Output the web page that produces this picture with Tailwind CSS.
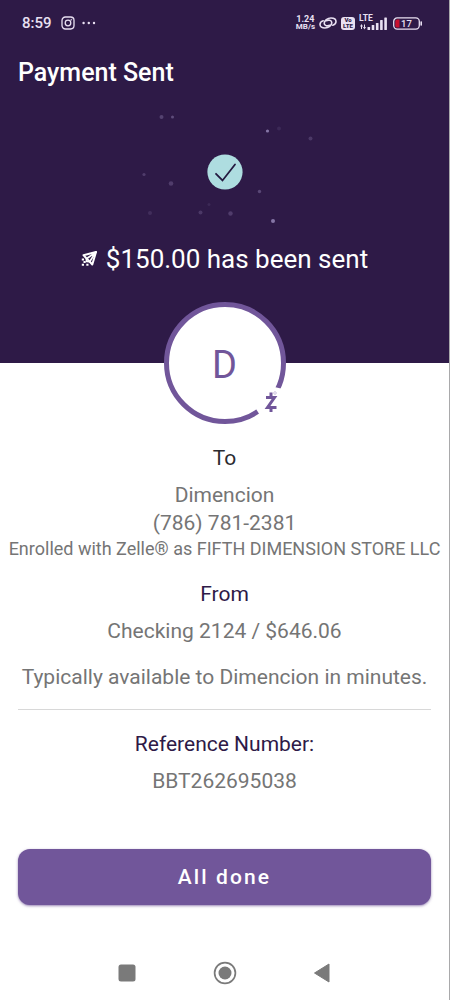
<!DOCTYPE html>
<html lang="en">
<head>
<meta charset="utf-8">
<meta name="viewport" content="width=device-width, initial-scale=1">
<title>Payment Sent</title>
<script src="https://cdn.jsdelivr.net/npm/@tailwindcss/browser@4"></script>
</head>
<body class="bg-white font-['Roboto',sans-serif]">
<div class="flex min-h-screen flex-col overflow-hidden border-r border-[#a9a9ab] text-[21px] leading-7 text-[#757575]">
  <header class="bg-[#2e1a47] pb-[88px] text-white">
    <div class="flex h-[46px] items-center pr-[26px] pl-[22px] text-[#e9e0f2]">
      <span class="text-[15px] font-medium">8:59</span>
      <svg class="ml-[9px] size-[14px]" viewBox="0 0 14 14" fill="none" stroke="currentColor" stroke-width="1.3" aria-hidden="true"><rect x="1" y="1" width="12" height="12" rx="3.4"/><circle cx="7" cy="7" r="2.8"/><circle cx="10.3" cy="3.7" r=".5" fill="currentColor" stroke-width=".5"/></svg>
      <svg class="ml-[7px] h-[14px] w-[14px]" viewBox="0 0 14 14" fill="currentColor" aria-hidden="true"><circle cx="1.6" cy="7" r="1.2"/><circle cx="6.8" cy="7" r="1.2"/><circle cx="12" cy="7" r="1.2"/></svg>
      <span class="ml-auto flex flex-col items-center text-[8px] leading-[8px] font-bold"><span class="text-[9px]">1.24</span><span>MB/s</span></span>
      <svg class="ml-1 h-[14px] w-[18px]" viewBox="0 0 18 14" fill="none" stroke="currentColor" stroke-width="1.6" stroke-linecap="round" aria-hidden="true"><path d="M11 9.300C8.500 10.300 5.200 10 5.200 7.200C5.200 4.500 8.500 2 12 2C15 2 17 3.300 17 5.500C17 7.300 15.500 8.700 13.800 9.200"/><path d="M7 4.700C9.500 3.700 12.800 4 12.800 6.800C12.800 9.500 9.500 12 6 12C3 12 1 10.700 1 8.500C1 6.700 2.500 5.300 4.200 4.800"/></svg>
      <span class="ml-1 flex h-[13px] w-[14px] flex-col items-center justify-center rounded-[3px] bg-[#e9e0f2] text-[6px] leading-[6px] font-black text-[#2e1a47]"><span>Vo</span><span>LTE</span></span>
      <svg class="ml-1 h-[18px] w-[28px]" viewBox="0 0 28 18" fill="currentColor" aria-hidden="true"><text x="0" y="7" font-size="8.500" font-weight="700">LTE</text><path d="M1 12.500L2.500 10L4 12.500H3V15H2V12.500ZM4 13H5V10.500H6V13H7L5.500 15.500Z"/><rect x="8.500" y="13" width="2.600" height="3" rx=".5"/><rect x="12.700" y="11" width="2.600" height="5" rx=".5"/><rect x="16.900" y="9" width="2.600" height="7" rx=".5"/><rect x="21.100" y="6" width="2.600" height="10" rx=".5"/><rect x="25.300" y="3.500" width="2.600" height="12.500" rx=".5"/></svg>
      <svg class="ml-[6px] h-[13px] w-[30px]" viewBox="0 0 30 13" aria-hidden="true"><rect x=".7" y=".9" width="25.600" height="11.200" rx="3.500" fill="none" stroke="currentColor" stroke-width="1.300"/><path d="M4 2.400H6.500V10.600H4Q2.300 10.600 2.300 8.900V4.100Q2.300 2.400 4 2.400Z" fill="#c8102e"/><rect x="27.400" y="4.300" width="1.600" height="4.400" rx=".7" fill="currentColor"/><text x="13.500" y="10" font-size="9.500" font-weight="500" text-anchor="middle" fill="currentColor">17</text></svg>
    </div>
    <h1 class="px-[18px] pt-[13px] text-[25px] leading-7 font-medium">Payment Sent</h1>
    <svg class="mx-auto mt-[13px] h-[140px] w-[200px]" viewBox="0 0 200 140" fill="#8f7fb0" role="img" aria-label="Success">
      <circle cx="36.500" cy="17" r="2" opacity=".4"/><circle cx="47.500" cy="17" r="1.500" opacity=".5"/><circle cx="142.500" cy="31" r="1.600" opacity=".9"/><circle cx="154" cy="28.500" r="2" opacity=".15"/><circle cx="185.500" cy="38.500" r="2" opacity=".3"/><circle cx="19" cy="74.500" r="1.600" opacity=".35"/><circle cx="46" cy="83.500" r="2.300" opacity=".35"/><circle cx="25" cy="113" r="2" opacity=".2"/><circle cx="75.500" cy="112.500" r="2" opacity=".3"/><circle cx="84" cy="104.500" r="1.500" opacity=".15"/><circle cx="105.500" cy="113.500" r="2.200" opacity=".35"/><circle cx="134.500" cy="91.500" r="1.700" opacity=".45"/><circle cx="148" cy="121" r="2" opacity=".9"/>
      <circle cx="100" cy="72" r="17.600" fill="#aedde0"/><path d="M91 73.800L97.500 80.500L110 64.500" fill="none" stroke="#241a40" stroke-width="1.800" stroke-linecap="round"/>
    </svg>
    <p class="mt-[3px] flex items-center justify-center gap-[9px] text-[26px] leading-8">
      <svg class="size-4" viewBox="0 0 16 16" fill="none" stroke="currentColor" stroke-width="2" stroke-linejoin="round" aria-hidden="true"><path d="M15 1L2.500 4.200L5.500 7.500L8.600 10.500L11.300 13.500Z"/><path d="M15 1L5.500 7.800V10.500L8.600 10.700Z" stroke-width="1.700"/><path d="M.8 8.500H3M2.500 11H4.700M.8 13.700H3M5.300 13.700H7.500" stroke-width="2"/></svg>
      <span>$150.00 has been sent</span>
    </p>
  </header>
  <main class="flex flex-col items-center text-center">
    <div class="relative -mt-[61px] flex size-[122px] items-center justify-center rounded-full border-[5px] border-[#71569a] bg-white pt-1 text-[38px] text-[#71569a]">D
      <svg class="absolute -right-1 -bottom-1 size-10" viewBox="0 0 40 40" aria-label="Zelle" role="img"><path d="M29.500 4L40 6.500V40H20L11 26Z" fill="#fff"/><path d="M21 14.500H29.500L22.500 24.500H31.500M26 9.500V14.500M26 24.500V29" fill="none" stroke="#71569a" stroke-width="3"/><circle cx="30" cy="10" r="1.300" fill="none" stroke="#c3b6d6" stroke-width=".8"/></svg>
    </div>
    <h2 class="mt-5 text-[#2b2b2f]">To</h2>
    <p class="mt-[9px]">Dimencion</p>
    <p>(786) 781-2381</p>
    <p class="text-lg leading-6 whitespace-nowrap">Enrolled with Zelle® as FIFTH DIMENSION STORE LLC</p>
    <h2 class="mt-[19px] text-[#2e1a47]">From</h2>
    <p class="mt-[9px]">Checking 2124 / $646.06</p>
    <p class="mt-[18px]">Typically available to Dimencion in minutes.</p>
    <div class="mt-[18px] w-full px-[18px]"><hr class="border-[#d8d8d8]"></div>
    <h2 class="mt-5 text-[#2e1a47]">Reference Number:</h2>
    <p class="mt-[9px]">BBT262695038</p>
    <div class="mt-[54px] w-full px-[18px]">
      <button type="button" class="h-14 w-full rounded-xl bg-[#71569a] font-medium tracking-widest text-white shadow-sm shadow-[#71569a]/60">All done</button>
    </div>
  </main>
  <nav class="mt-auto flex items-center justify-center gap-[74px] pb-[15px] text-[#7a7a7a]" aria-label="System">
    <button type="button" aria-label="Recent apps"><svg class="size-6" viewBox="0 0 24 24" fill="currentColor"><rect x="3.500" y="3.500" width="17" height="17" rx="2.500"/></svg></button>
    <button type="button" aria-label="Home"><svg class="size-6" viewBox="0 0 24 24" fill="currentColor"><circle cx="12" cy="12" r="10.400" fill="none" stroke="currentColor" stroke-width="1.700"/><circle cx="12" cy="12" r="6.500"/></svg></button>
    <button type="button" aria-label="Back"><svg class="size-6" viewBox="0 0 24 24" fill="currentColor"><path d="M3.500 12L18 3V21Z" stroke="currentColor" stroke-linejoin="round"/></svg></button>
  </nav>
</div>
</body>
</html>
